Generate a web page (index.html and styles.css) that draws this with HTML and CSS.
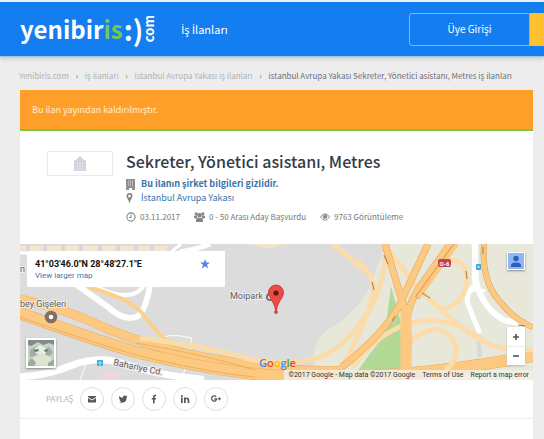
FILE: index.html
```html
<!DOCTYPE html>
<html lang="tr">
<head>
<meta charset="utf-8">
<meta name="viewport" content="width=device-width, initial-scale=1">
<title>Sekreter, Yönetici asistanı, Metres</title>
<link rel="stylesheet" href="styles.css">
</head>
<body>
<header class="topbar">
  <a class="logo" href="#"><span class="logo-name">yenibir<span class="logo-accent">is</span></span><span class="logo-smile">:)</span><span class="logo-com">com</span></a>
  <nav class="nav"><a href="#"><span class="dotted">İ</span>ş <span class="dotted">İ</span>lanları</a></nav>
  <div class="account"><button class="login" type="button">Üye Girişi</button><span class="signup"></span></div>
</header>

<nav class="crumbs">
  <a href="#">Yenibiris.com</a><i>›</i><a href="#"><span class="dotted">İ</span>ş <span class="dotted">İ</span>lanları</a><i>›</i><a href="#"><span class="dotted">İ</span>stanbul Avrupa Yakası <span class="dotted">İ</span>ş <span class="dotted">İ</span>lanları</a><i>›</i><span class="current"><span class="dotted">İ</span>stanbul Avrupa Yakası Sekreter, Yönetici asistanı, Metres <span class="dotted">İ</span>ş <span class="dotted">İ</span>lanları</span>
</nav>

<main class="card">
  <p class="notice">Bu ilan yayından kaldırılmıştır.</p>

  <section class="job">
    <div class="company-logo">
      <svg width="14" height="15" viewBox="0 0 14 15"><path d="M1 5l3-2v12H1zM4 3l3-3 3 3v12H4zM10 3l3 2v10h-3z" fill="#cdd2d9"/><path d="M4.500 3v12M7 2v13M9.500 3v12M1 7h12M1 10h12M1 13h12" stroke="#e6e9ed" stroke-width=".6"/></svg>
    </div>
    <div class="details">
      <h1>Sekreter, Yönetici asistanı, Metres</h1>
      <p class="line"><svg width="9" height="11" viewBox="0 0 9 11"><path d="M0 0h9v11H6V9H3v2H0z" fill="#909090"/><path d="M2 2h1M4 2h1M6 2h1M2 4h1M4 4h1M6 4h1M2 6h1M4 6h1M6 6h1" stroke="#ddd"/></svg><a class="strong" href="#">Bu ilanın şirket bilgileri gizlidir.</a></p>
      <p class="line place"><svg width="9" height="11" viewBox="0 0 9 11"><path fill-rule="evenodd" d="M3.500 0A3 3 0 0 1 6.500 3C6.500 5 4 7 3.500 10.500C3 7 .5 5 .5 3A3 3 0 0 1 3.500 0zM3.500 1.700a1.400 1.400 0 1 0 0 2.800a1.400 1.400 0 0 0 0-2.800z" fill="#858585"/></svg><a href="#"><span class="dotted">İ</span>stanbul Avrupa Yakası</a></p>
      <ul class="stats">
        <li><svg width="10" height="10" viewBox="0 0 10 10"><circle cx="5" cy="5" r="4.100" fill="none" stroke="#858585" stroke-width="1.100"/><path d="M5 2.500V5.500H3" fill="none" stroke="#858585"/></svg>03.11.2017</li>
        <li><svg width="11" height="10" viewBox="0 0 11 10"><g fill="#858585"><circle cx="2.200" cy="1.800" r="1.600"/><circle cx="8.800" cy="1.800" r="1.600"/><circle cx="5.500" cy="3.200" r="2.200"/><path d="M0 6V4.500Q0 3.500 1 3.500h2L3 5.500L1.600 6.500zM11 6V4.500Q11 3.500 10 3.500H8l0 2L9.400 6.500zM2 10V8Q2 5.800 3.800 5.500Q5.500 6.700 7.200 5.500Q9 5.800 9 8v2z"/></g></svg>0 - 50 Arası Aday Başvurdu</li>
        <li><svg width="10" height="8" viewBox="0 0 10 8"><path d="M.4 4Q5-2.400 9.600 4Q5 10.400.4 4z" fill="none" stroke="#858585" stroke-width=".9"/><circle cx="5" cy="3.500" r="2.300" fill="#858585"/><path d="M3.800 3.300Q4 2.200 5 2.200" fill="none" stroke="#fff" stroke-width=".6"/></svg>9763 Görüntüleme</li>
      </ul>
    </div>
  </section>

  <section class="map">
    <svg class="map-canvas" viewBox="0 0 513 136" preserveAspectRatio="xMidYMid slice">
      <rect width="513" height="136" fill="#dcdcdc"/>
      <path d="M298 136L293 112Q295 96 306 87Q333 71 347 48L366 0H513V136z" fill="#e7e7da"/>
      <path d="M341 0H366L347 48L341 58z" fill="#dcdcdc"/>
      <path d="M371 42L377 65L383 86V132H334L349 111L365 90z" fill="#b2d995"/>
      <path d="M0 2H147V8H0z" fill="#f1e6cf"/>
      <path d="M8 0V9M25 0V9M43 0V9M61 0V9M80 0V9M98 0V9M116 0V9M132 0V9" stroke="#d8d8d8" stroke-width="4"/>
      <path d="M0 9H150L161 0" fill="none" stroke="#fff" stroke-width="3"/>
      <path d="M160 8Q175 6 190 0" fill="none" stroke="#fff" stroke-width="5"/>
      <path d="M227 0H266L249 5z" fill="#f1e3c8"/>
      <g fill="none" stroke="#fff" stroke-linecap="round">
        <path d="M57 41L88 63Q103 77 116 73Q125 70 130 41" stroke-width="6"/>
        <path d="M72 41Q110 60 123 43" stroke-width="4"/>
        <path d="M0 133Q29 131 50 122Q75 112 98 118Q139 132 181 135" stroke-width="7"/>
        <path d="M60 136L66 120M136 96Q147 88 172 94L163 132" stroke-width="1"/>
        <path d="M454 0L457 40Q443 49 449 63L459 87" stroke-width="5"/>
        <path d="M455 0V36Q464 67 486 77L513 81" stroke-width="6"/>
        <path d="M449 48Q457 44 464 47" stroke-width="3"/>
      </g>
      <path d="M458 91L460 113" stroke="#d8d8d8" stroke-width="4"/>
      <path d="M82 128H100V136H77z" fill="#ecd6df"/>
      <g fill="none">
        <path d="M68 43Q111 55 122 69Q132 83 146 96" stroke="#fbd08b" stroke-width="4"/>
        <path d="M0 55Q46 65 83 83Q137 106 201 116Q270 129 325 126" stroke="#ebb165" stroke-width="9"/>
        <path d="M0 55Q46 65 83 83Q137 106 201 116Q270 129 325 126" stroke="#fdc980" stroke-width="8"/>
        <path d="M0 69Q68 94 116 108Q190 126 245 131Q360 140 513 112" stroke="#e7ac60" stroke-width="12"/>
        <path d="M0 69Q68 94 116 108Q190 126 245 131Q360 140 513 112" stroke="#fdc980" stroke-width="11"/>
        <path d="M120 94Q190 103 230 115Q270 124 303 112Q330 99 350 65Q362 44 366 12" stroke="#f9dcaa" stroke-width="5"/>
        <path d="M116 99Q182 110 235 126M0 73Q68 97 116 111Q190 129 235 133" stroke="#dfa454" stroke-width=".7"/>
        <path d="M313 0L347 28M338 17Q356 33 353 50Q346 79 325 118M363 0Q380 20 397 44L428 72Q460 101 482 104L513 106" stroke="#fbdcaa" stroke-width="5"/>
        <path d="M333 123Q353 94 380 83Q406 72 432 80Q447 84 464 98" stroke="#fbdcaa" stroke-width="5"/>
        <path d="M388 100Q409 78 428 90Q443 104 431 121L425 126" stroke="#fbdcaa" stroke-width="5"/>
        <path d="M422 66Q446 60 447 34Q446 14 428 17M422 66L396 43" stroke="#fbdcaa" stroke-width="5"/>
        <path d="M365 0L380 50Q392 79 386 130M408 0L378 64Q362 91 322 123M430 0L397 47Q385 66 386 93" stroke="#dfa454" stroke-width="7"/>
        <path d="M365 0L380 50Q392 79 386 130M408 0L378 64Q362 91 322 123M430 0L397 47Q385 66 386 93" stroke="#fdc980" stroke-width="6"/>
        <path d="M436 0L397 54" stroke="#e0a659" stroke-width="5"/>
        <path d="M437 0L398 54" stroke="#fdc980" stroke-width="4"/>
        <path d="M386 67V130" stroke="#fdc980" stroke-width="11"/>
        <path d="M464 0Q461 39 482 60Q496 77 513 83" stroke="#d99d55" stroke-width="6"/>
        <path d="M464 0Q461 39 482 60Q496 77 513 83" stroke="#fdc980" stroke-width="5"/>
        <path d="M364 11L368 20M352 38L354 46M402 49L410 54M446 27L447 35M372 77L375 72M463 3V10M498 81L505 82" stroke="#987b56"/>
      </g>
      <rect x="77" y="116" width="6" height="6" rx="1" fill="#35a9df"/><path d="M79 120V118h2v2M79 121h2" stroke="#fff" stroke-width=".7" fill="none"/>
      <rect x="456" y="20" width="5" height="6" rx="1" fill="#35a9df"/><path d="M458 24V22h1v2" stroke="#fff" stroke-width=".7" fill="none"/>
      <rect x="418" y="15" width="13" height="8" rx="2" fill="#bf4250"/>
      <text class="road-code" x="424.500" y="21.500" text-anchor="middle">O-6</text>
      <circle cx="31" cy="73" r="4.300" fill="#fff" stroke="#826e66" stroke-width="4"/>
      <text class="map-label" x="0" y="63">bey Gişeleri</text>
      <text class="map-label" x="0" y="28">n</text>
      <text class="map-label" x="210" y="55">Moipark</text>
      <text class="map-label" transform="translate(93 121) rotate(12)">Bahariye Cd.</text>
      <circle cx="250" cy="53" r="3" fill="#fff" stroke="#826e66" stroke-width="2"/>
      <path d="M256 41a7.500 7.500 0 0 1 7.500 7.500C263.500 54 257.500 58 256.500 66h-1C254.500 58 248.500 54 248.500 48.500A7.500 7.500 0 0 1 256 41z" fill="#ea4b45" stroke="#be312d" stroke-width=".8"/>
      <circle cx="256" cy="49" r="2.600" fill="#66120f"/><circle cx="256" cy="68" r="1.500" fill="#db4640" stroke="#af2c27" stroke-width=".6"/>
      <text class="google" x="239" y="123"><tspan fill="#4285f4">G</tspan><tspan fill="#ea4335">o</tspan><tspan fill="#fbbc05">o</tspan><tspan fill="#4285f4">g</tspan><tspan fill="#34a853">l</tspan><tspan fill="#ea4335">e</tspan></text>
    </svg>
    <div class="place-card">
      <div><strong>41°03'46.0"N 28°48'27.1"E</strong><a href="#">View larger map</a></div>
      <svg width="10" height="10" viewBox="0 0 20 20"><path d="M10 0l2.500 7H20l-6 4.600L16.300 19 10 14.600 3.700 19 6 11.600 0 7h7.500z" fill="#5285e4"/></svg>
    </div>
    <button class="satellite" type="button" aria-label="Uydu">
      <svg width="26" height="26" viewBox="0 0 26 26"><path d="M0 0h26v26H0z" fill="#c8d1c2"/><path d="M0 0h26v5l-5-2-6 2-5-3-7 4-3-1z" fill="#7f8c87"/><path d="M2 10l7-4 5 4 7-3 4 5-4 5-7-2-6 4-6-3z" fill="#9fafa5"/><path d="M7 8l5-3 7 4-2 6-9-1z" fill="#e9ede1"/><path d="M3 18l8-4 11 2 3 6-7 4-12-1z" fill="#dfe4cf"/><path d="M6 10l4-1 1 2-4 1zM16 10l3-1 1 2-3 1z" fill="#5d7569"/><path d="M0 22l4-4 4 5-2 3H0zM20 23l6-4v7h-6z" fill="#9cab9e"/></svg>
    </button>
    <button class="profile" type="button" aria-label="Hesap"><svg width="16" height="16" viewBox="0 0 16 16"><path d="M0 0h16v16H0z" fill="#8eb8f4"/><circle cx="8" cy="5.500" r="2.700" fill="#2c5fbd"/><path d="M3 14v-2Q3 9.500 8 9.500T13 12v2z" fill="#2c5fbd"/></svg></button>
    <div class="zoom"><button type="button" aria-label="Yakınlaştır"><svg width="8" height="8" viewBox="0 0 8 8"><path d="M1 4h6M4 1v6" stroke="#555" stroke-width="1.600"/></svg></button><button type="button" aria-label="Uzaklaştır"><svg width="8" height="8" viewBox="0 0 8 8"><path d="M1 4h6" stroke="#555" stroke-width="1.600"/></svg></button></div>
    <div class="legal"><span>©2017 Google - Map data ©2017 Google</span><a href="#">Terms of Use</a><a href="#">Report a map error</a></div>
  </section>

  <section class="share">
    <span>PAYLAŞ</span>
    <a href="#" aria-label="E-posta"><svg width="10" height="10" viewBox="0 0 10 10"><path d="M1 2h8v1L5 5.500 1 3zM1 4l4 2.600L9 4v4.500H1z" fill="#4e5960"/></svg></a>
    <a href="#" aria-label="Twitter"><svg width="10" height="10" viewBox="0 0 10 10"><path d="M1 2Q3 4 5 3.800Q4.800 1.500 6.600 1.500Q7.300 1.500 8 2.100L9.200 1.700L8.600 2.700L9.500 2.600L8.600 3.500Q8.500 8.700 4 8.700Q2.300 8.700 1 7.900Q2.500 7.900 3.200 7.200Q2 7 1.700 6H2.500Q1 5.300 1 4L1.800 4.200Q.6 3.200 1 2z" fill="#4e5960"/></svg></a>
    <a href="#" aria-label="Facebook"><svg width="10" height="10" viewBox="0 0 10 10"><path d="M4 9.500V5.500H2.700V4H4V2.800Q4 .8 6 .8H7.200V2.300H6.300Q5.600 2.300 5.600 3V4H7.100L6.900 5.500H5.600v4z" fill="#4e5960"/></svg></a>
    <a href="#" aria-label="LinkedIn"><svg width="10" height="10" viewBox="0 0 10 10"><path d="M1 3.500h1.700V9H1zM4 3.500h1.600v.8Q6.200 3.400 7.300 3.400Q9.300 3.400 9.300 5.900V9H7.600V6.200Q7.600 4.900 6.700 4.900Q5.700 4.900 5.700 6.200V9H4z" fill="#4e5960"/><circle cx="1.850" cy="1.900" r="1" fill="#4e5960"/></svg></a>
    <a href="#" aria-label="Google+"><svg width="10" height="10" viewBox="0 0 10 10"><path d="M5.200 2.800A2.600 2.600 0 1 0 5.800 5H3.300" fill="none" stroke="#4e5960" stroke-width="1.300"/><path d="M7 4.800h3M8.500 3.300v3" stroke="#4e5960"/></svg></a>
  </section>
</main>
</body>
</html>
```

FILE: styles.css
```css
* { box-sizing: border-box; }

body {
  margin: 0;
  min-height: 100vh;
  display: flex;
  flex-direction: column;
  background: #ededed;
  color: #777;
  font: 9px/14px "Noto Sans CJK SC", "Noto Sans", sans-serif;
}

a { color: inherit; text-decoration: none; }
p, h1, ul { margin: 0; padding: 0; }
button { font: inherit; border: 0; padding: 0; }
svg { display: block; flex: none; }

/* The CJK family has no capital dotted I of its own. */
.dotted { font-family: Roboto, sans-serif; line-height: 1; }

.topbar {
  display: flex;
  align-items: center;
  height: 57px;
  padding-left: 20px;
  background: #147df0;
  border-top: 2px solid #e6f1f5;
  border-bottom: 1px solid #a4c4e6;
  box-shadow: 0 1px 5px #bbb;
  color: #fff;
}

.logo {
  display: flex;
  align-items: center;
  font: 700 24px/36px "Noto Sans CJK SC", sans-serif;
}
.logo-accent { color: #74c853; }
.logo-smile { margin-left: 1px; font-size: 28px; }
.logo-com {
  writing-mode: vertical-rl;
  transform: rotate(180deg);
  font-size: 13px;
  line-height: 12px;
}

.nav { margin-left: 26px; font-size: 11px; }
.account { display: flex; margin-left: auto; }
.login {
  width: 121px;
  height: 33px;
  border: 1px solid #9bb89b;
  border-radius: 3px 0 0 3px;
  background: transparent;
  color: #fff;
  font-size: 10px;
}
.signup { width: 14px; background: #fec02c; }

.crumbs {
  display: flex;
  align-items: center;
  height: 33px;
  padding: 5px 0 0 19px;
  color: #b2b2b2;
  font-size: 8px;
  white-space: nowrap;
}
.crumbs i { width: 16px; text-align: center; color: #666; font-style: normal; }
.current { color: #707078; }

.card {
  flex: 1;
  margin: 0 11px 0 20px;
  background: #fff;
}
.notice {
  padding: 13px 12px 12px;
  background: #ff9f2a;
  border-bottom: 2px solid #7fc33b;
  color: #fff0cf;
}

.job { display: flex; gap: 13px; padding: 20px 27px 20px; }
.company-logo {
  display: flex;
  align-items: center;
  justify-content: center;
  width: 66px;
  height: 25px;
  border: 1px solid #e9e9e9;
}
.details { flex: 1; }
h1 { color: #343b46; font-size: 16px; line-height: 20px; font-weight: 500; margin-bottom: 6px; }
.line { display: flex; align-items: center; gap: 6px; color: #3975a8; }
.strong { font-weight: 700; }
.stats { display: flex; gap: 14px; margin-top: 5px; list-style: none; font-size: 8px; }
.stats li { display: flex; align-items: center; gap: 4px; }

.map {
  position: relative;
  height: 136px;
  overflow: hidden;
  color: #333;
  font: 7px/10px Roboto, sans-serif;
}
.map-canvas { width: 100%; height: 100%; }
.map-label { fill: #655b57; font: 9px Roboto, sans-serif; stroke: #eee; stroke-width: 2px; paint-order: stroke; }
.road-code { fill: #fff; font: 700 6px Roboto, sans-serif; }
.google { font: 600 11px "Open Sans", sans-serif; }
.place-card {
  position: absolute;
  top: 7px;
  left: 7px;
  display: flex;
  justify-content: space-between;
  width: 198px;
  height: 36px;
  padding: 8px 15px 0 8px;
  background: #fff;
  font-size: 9px;
}
.place-card strong, .place-card a { display: block; line-height: 11px; }
.place-card strong { color: #111; }
.place-card a { color: #3b78b2; font-size: 8px; }
.satellite, .profile { position: absolute; background: #fff; box-shadow: 0 1px 2px #888; }
.satellite { left: 6px; bottom: 12px; padding: 2px; }
.profile { top: 8px; right: 8px; padding: 1px; }
.zoom { position: absolute; right: 8px; bottom: 15px; width: 18px; background: #fff; box-shadow: 0 1px 2px #bbb; }
.zoom button { display: grid; place-items: center; width: 100%; height: 19px; background: none; }
.zoom button + button { border-top: 1px solid #eee; }
.legal {
  position: absolute;
  right: 0;
  bottom: 0;
  display: flex;
  gap: 7px;
  padding: 0 4px;
  background: #f1f1eacc;
}

.share {
  display: flex;
  align-items: center;
  gap: 7px;
  height: 39px;
  padding-left: 26px;
  border-bottom: 1px solid #eee;
  color: #b5b5b5;
  font-size: 8px;
}
.share a { display: grid; place-items: center; width: 24px; height: 24px; border: 1px solid #dedede; border-radius: 50%; }
```
